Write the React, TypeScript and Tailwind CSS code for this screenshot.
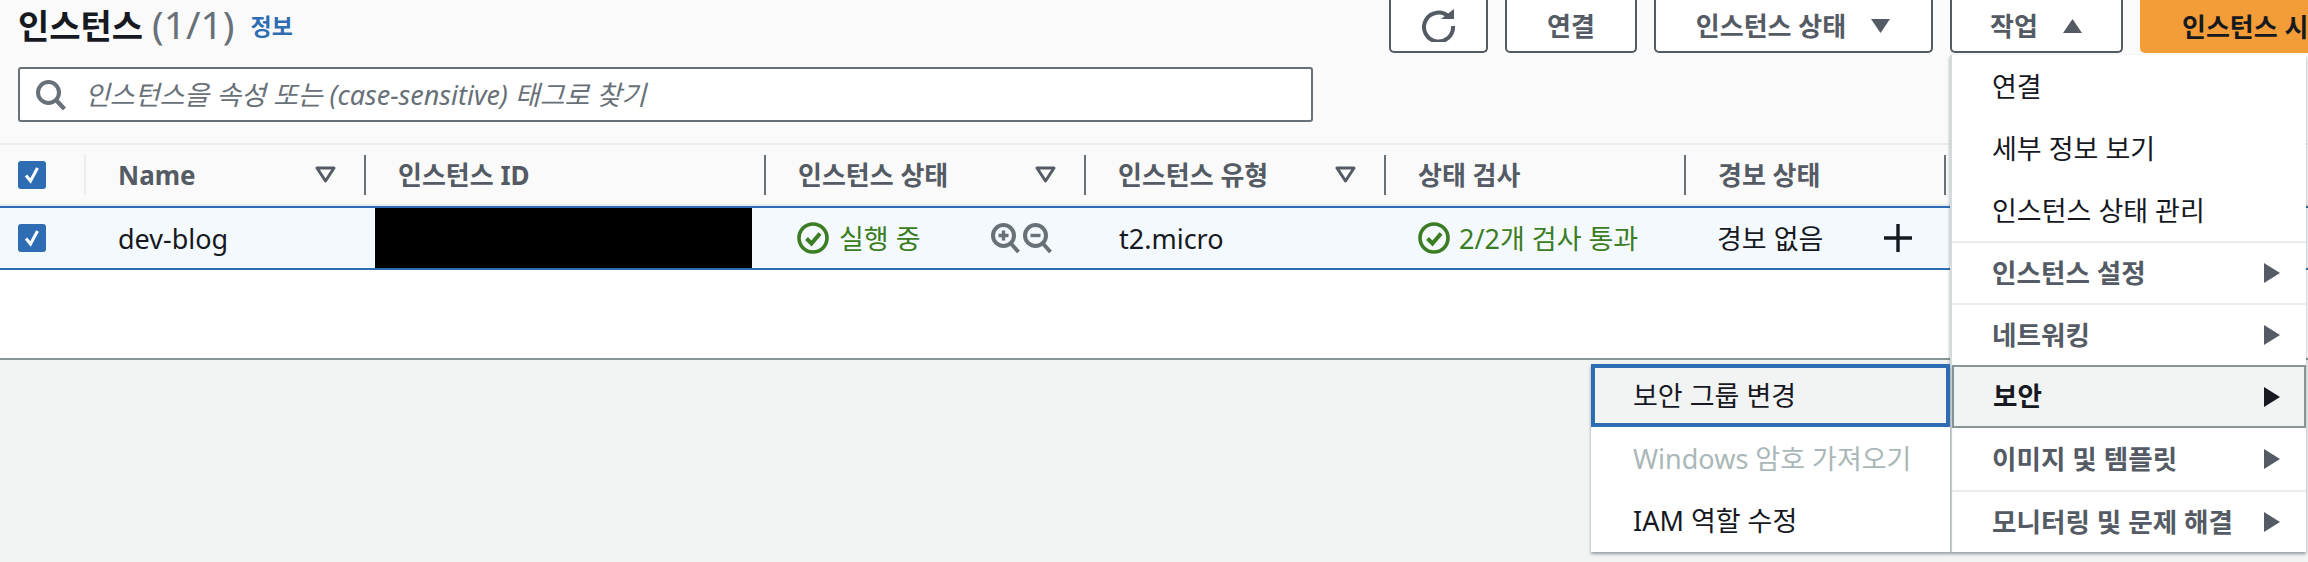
import React from 'react';

const Caret = ({ up = false, color = '#545b64' }: { up?: boolean; color?: string }) => (
  <svg width="21" height="16" viewBox="0 0 21 16" className="shrink-0">
    <path d={up ? 'M10.5 1 L20 15 H1 Z' : 'M1 1 H20 L10.5 15 Z'} fill={color} />
  </svg>
);

const FilterIcon = () => (
  <svg width="21" height="17" viewBox="0 0 21 17" className="shrink-0">
    <path d="M2 2 H19 L10.5 15 Z" fill="none" stroke="#545b64" strokeWidth="3" strokeLinejoin="round" />
  </svg>
);

const RightArrow = ({ color = '#545b64' }: { color?: string }) => (
  <svg width="16" height="20" viewBox="0 0 16 20" className="shrink-0">
    <path d="M0 0 L16 10 L0 20 Z" fill={color} />
  </svg>
);

const StatusOk = () => (
  <svg width="32" height="32" viewBox="0 0 32 32" className="shrink-0">
    <circle cx="16" cy="16" r="14" fill="none" stroke="#3a7d22" strokeWidth="3.6" />
    <path d="M9.5 16.5 L14.5 21.5 L23 11.5" fill="none" stroke="#3a7d22" strokeWidth="4" />
  </svg>
);

const ZoomIcon = ({ plus }: { plus: boolean }) => (
  <svg width="29" height="30" viewBox="0 0 29 30" className="shrink-0">
    <circle cx="12.5" cy="12.5" r="10.5" fill="none" stroke="#687078" strokeWidth="4" />
    <path d="M19.5 20 L27.5 29" stroke="#687078" strokeWidth="4" />
    <path d={plus ? 'M7.5 12.5 H17.5 M12.5 7.5 V17.5' : 'M7.5 12.5 H17.5'} stroke="#687078" strokeWidth="3.4" />
  </svg>
);

const RefreshIcon = () => (
  <svg width="34" height="33" viewBox="0 0 34 33">
    <path d="M27 8 A14.5 14.5 0 1 0 31 17" fill="none" stroke="#545b64" strokeWidth="4" />
    <path d="M19 10 H32 V0 Z" fill="#545b64" />
  </svg>
);

const SearchIcon = () => (
  <svg width="30" height="30" viewBox="0 0 30 30" className="shrink-0">
    <circle cx="12.5" cy="12.5" r="10.5" fill="none" stroke="#687078" strokeWidth="4" />
    <path d="M20 20 L28.5 29" stroke="#687078" strokeWidth="4.4" />
  </svg>
);

const CheckBox = () => (
  <div className="flex h-7 w-7 items-center justify-center rounded-[3px] bg-[#2e6db4]">
    <svg width="18" height="20" viewBox="0 0 18 20">
      <path d="M3 10.5 L7.5 16 L14.5 3" fill="none" stroke="#fff" strokeWidth="3" />
    </svg>
  </div>
);

const ToolButton = ({ className, children }: { className: string; children: React.ReactNode }) => (
  <button className={`flex h-[53px] shrink-0 items-center justify-center gap-6 rounded-b-[5px] border-2 border-t-0 border-[#545b64] bg-white text-[26px] font-bold text-[#545b64] ${className}`}>
    {children}
  </button>
);

const HeaderCell = ({ label, filter = false, light = false }: { label: string; filter?: boolean; light?: boolean }) => (
  <div className={`flex h-10 items-center justify-between border-l-2 pl-[32px] pr-[28px] text-[26px] font-bold text-[#545b64] ${light ? 'border-[#eaeded]' : 'border-[#687078]'}`}>
    <span>{label}</span>
    {filter && <FilterIcon />}
  </div>
);

const MenuItem = ({ label, sub = false, line = false }: { label: string; sub?: boolean; line?: boolean }) => (
  <div className={`flex h-[62px] items-center justify-between pl-[40px] pr-[26px] ${sub ? 'text-[26.6px] font-bold text-[#545b64]' : 'text-[#16191f]'} ${line ? 'border-t-2 border-[#eaeded]' : ''}`}>
    <span>{label}</span>
    {sub && <RightArrow />}
  </div>
);

export default function App() {
  return (
    <div className="relative h-[562px] w-[2308px] overflow-hidden bg-[#f2f3f3] font-['Noto_Sans','Noto_Sans_CJK_KR',sans-serif] text-[27px] leading-none text-[#16191f]">
      <div className="h-[360px] border-b-2 border-[#879596] bg-white">
        <div className="h-[143px] bg-[#fafafa]">
          <div className="flex items-start">
            <div className="flex h-[46px] flex-1 items-center pl-[18px]">
              <h1 className="text-[34px] font-bold">
                인스턴스 <span className="text-[39px] font-normal text-[#687078]">(1/1)</span>
              </h1>
              <a className="ml-[16px] mt-[6px] text-[23px] font-bold text-[#2e6db4]">정보</a>
            </div>
            <div className="flex gap-[17px]">
              <ToolButton className="w-[99px]"><RefreshIcon /></ToolButton>
              <ToolButton className="w-[132px]">연결</ToolButton>
              <ToolButton className="w-[279px]">인스턴스 상태 <Caret /></ToolButton>
              <ToolButton className="w-[173px]">작업 <Caret up /></ToolButton>
              <div className="flex h-[53px] w-[168px] shrink-0 items-center overflow-hidden whitespace-nowrap rounded-bl-[5px] bg-[#f29d38] pl-[42px] text-[26px] font-bold">
                인스턴스 시작
              </div>
            </div>
          </div>
          <div className="ml-[18px] mt-[14px] flex h-[55px] w-[1295px] items-center gap-[19px] rounded-[3px] border-2 border-[#687078] bg-white pl-4">
            <SearchIcon />
            <span className="italic text-[#687078]">인스턴스을 속성 또는 (case-sensitive) 태그로 찾기</span>
          </div>
        </div>

        <div className="grid h-[63px] grid-cols-[84px_280px_400px_320px_300px_300px_260px_1fr] items-center border-y-2 border-[#eaeded] bg-[#fafafa]">
          <div className="pl-[18px]"><CheckBox /></div>
          <HeaderCell label="Name" filter light />
          <HeaderCell label="인스턴스 ID" />
          <HeaderCell label="인스턴스 상태" filter />
          <HeaderCell label="인스턴스 유형" filter />
          <HeaderCell label="상태 검사" />
          <HeaderCell label="경보 상태" />
          <HeaderCell label="" />
        </div>

        <div className="grid h-[64px] grid-cols-[85px_280px_400px_320px_300px_300px_260px_1fr] items-center border-y-2 border-[#2e6db4] bg-[#f4f9fd]">
          <div className="pl-[18px]"><CheckBox /></div>
          <div className="pl-[33px]">dev-blog</div>
          <div className="h-full pl-[10px]"><div className="h-full w-[377px] bg-black" /></div>
          <div className="flex items-center pl-[32px] text-[#3a7d22]">
            <StatusOk />
            <span className="ml-[10px] w-[80px] whitespace-nowrap">실행 중</span>
            <span className="ml-[72px] flex gap-[3px]"><ZoomIcon plus /><ZoomIcon plus={false} /></span>
          </div>
          <div className="pl-[34px]">t2.micro</div>
          <div className="flex items-center pl-[33px] text-[#3a7d22]">
            <StatusOk />
            <span className="ml-[9px]">2/2개 검사 통과</span>
          </div>
          <div className="flex items-center pl-[32px]">
            <span className="w-[105px] whitespace-nowrap">경보 없음</span>
            <svg width="28" height="28" viewBox="0 0 28 28" className="ml-[62px]">
              <path d="M0 14 H28 M14 0 V28" stroke="#16191f" strokeWidth="3.4" />
            </svg>
          </div>
          <div />
        </div>
      </div>

      <div className="absolute left-[1950px] top-[55px] w-[356px] border-l-2 border-[#d5dbdb] bg-white shadow-[0_2px_3px_rgba(0,28,36,0.4)]">
        <MenuItem label="연결" />
        <MenuItem label="세부 정보 보기" />
        <MenuItem label="인스턴스 상태 관리" />
        <MenuItem label="인스턴스 설정" sub line />
        <MenuItem label="네트워킹" sub line />
        <div className="flex h-[63px] items-center justify-between border-2 border-[#879596] bg-[#f2f3f3] pl-[39px] pr-[24px] text-[26.6px] font-bold">
          <span>보안</span>
          <RightArrow color="#16191f" />
        </div>
        <MenuItem label="이미지 및 템플릿" sub />
        <MenuItem label="모니터링 및 문제 해결" sub line />
      </div>

      <div className="absolute left-[1591px] top-[364px] w-[359px] bg-white shadow-[0_2px_3px_rgba(0,28,36,0.4)]">
        <div className="flex h-[63px] items-center border-[4px] border-[#2e6db4] bg-[#f2f3f3] pl-[38px]">보안 그룹 변경</div>
        <div className="flex h-[62px] items-center pl-[42px] text-[#aab7b8]">Windows 암호 가져오기</div>
        <div className="flex h-[63px] items-center pl-[42px]">IAM 역할 수정</div>
      </div>
    </div>
  );
}
